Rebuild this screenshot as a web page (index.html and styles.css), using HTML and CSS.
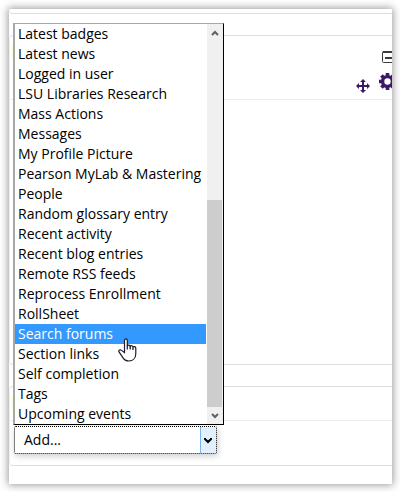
FILE: index.html
```html
<!DOCTYPE html>
<html lang="en">
<head>
<meta charset="utf-8">
<meta name="viewport" content="width=device-width, initial-scale=1">
<title>Add a block</title>
<link rel="stylesheet" href="styles.css">
</head>
<body>
<main class="panel">
  <section class="block block-end"></section>
  <section class="block block-tall">
    <header class="block-header tools">
      <span class="marker"></span>
      <button class="icon-button collapse" aria-label="Collapse block">
        <svg width="14" height="12" viewBox="0 0 14 12"><rect x="0.500" y="0.500" width="13" height="11" rx="1" fill="#fff" stroke="#3c3c3c"/><path d="M1 1h12M3 7h8" stroke="#3c3c3c" stroke-width="2"/></svg>
      </button>
      <div class="tool-row">
        <button class="icon-button" aria-label="Move block">
          <svg width="14" height="14" viewBox="0 0 14 14" fill="#3c1a68"><path d="M7 0 10 3H8v3h3V4l3 3-3 3V8H8v3h2l-3 3-3-3h2V8H3v2L0 7l3-3v2h3V3H4z"/></svg>
        </button>
        <button class="icon-button gear" aria-label="Block actions">
          <svg width="17" height="17" viewBox="0 0 16 16"><circle cx="8" cy="8" r="4.600" fill="none" stroke="#3c1a68" stroke-width="3.200"/><path d="M8 0v3M8 13v3M0 8h3M13 8h3M2.300 2.300l2 2M11.700 11.700l2 2M2.300 13.700l2-2M11.700 4.300l2-2" stroke="#3c1a68" stroke-width="3.400"/></svg>
        </button>
      </div>
    </header>
  </section>
  <section class="block block-add">
    <header class="block-header"><span class="marker"></span></header>
    <div class="picker">
      <select class="add" aria-label="Add a block"><option>Add...</option></select>
      <svg class="add-arrow" width="8" height="7" viewBox="0 0 8 7"><path d="M1 1v1l3 3 3-3V1" fill="none" stroke="#000" stroke-width="2"/></svg>
      <div class="menu">
        <ul class="options" role="listbox" aria-label="Blocks">
          <li role="option">Latest badges</li>
          <li role="option">Latest news</li>
          <li role="option">Logged in user</li>
          <li role="option">LSU Libraries Research</li>
          <li role="option">Mass Actions</li>
          <li role="option">Messages</li>
          <li role="option">My Profile Picture</li>
          <li role="option">Pearson MyLab &amp; Mastering</li>
          <li role="option">People</li>
          <li role="option">Random glossary entry</li>
          <li role="option">Recent activity</li>
          <li role="option">Recent blog entries</li>
          <li role="option">Remote RSS feeds</li>
          <li role="option">Reprocess Enrollment</li>
          <li role="option">RollSheet</li>
          <li role="option" class="active" aria-selected="true">Search forums
            <svg class="cursor" width="19" height="24" viewBox="0 0 19 24"><path d="M6.500 14.500V2.600C6.500.4 9.300.4 9.300 2.600V8c.4-1.300 2.700-1.200 2.900.4.500-1.100 2.600-.9 2.800.7.600-1 2.800-.7 2.800 1.200v5.200c0 4.500-2.900 7.500-7 7.500-3 0-4.700-1.200-6.100-3.600L1 13.900c-.8-1.700 1.200-2.700 2.500-1.500z" fill="#fff" stroke="#1c1c2c" stroke-width="1.200"/><path d="M9.300 7.500v4M12.200 8.500v3M15 9.500v2.500" stroke="#1c1c2c" stroke-width="1.200"/></svg>
          </li>
          <li role="option">Section links</li>
          <li role="option">Self completion</li>
          <li role="option">Tags</li>
          <li role="option">Upcoming events</li>
        </ul>
        <div class="scrollbar">
          <button class="icon-button scroll-step" aria-label="Scroll up"><svg width="8" height="6" viewBox="0 0 8 6"><path d="M1 5 4 2 7 5" fill="none" stroke="#606060" stroke-width="2"/></svg></button>
          <div class="track"><div class="thumb"></div></div>
          <button class="icon-button scroll-step" aria-label="Scroll down"><svg width="8" height="6" viewBox="0 0 8 6"><path d="M1 1 4 4 7 1" fill="none" stroke="#606060" stroke-width="2"/></svg></button>
        </div>
      </div>
    </div>
  </section>
</main>
</body>
</html>
```
FILE: styles.css
```css
* { box-sizing: border-box; }

body {
  margin: 0;
  padding: 9px 8px 8px 9px;
  background: #fff;
  color: #000;
  font: 14px/20px "Open Sans", "Noto Sans", sans-serif;
}

.panel {
  display: flex;
  flex-direction: column;
  gap: 21px;
  padding-bottom: 18px;
  overflow: hidden;
  background: #fff;
  box-shadow: 0 0 8px 1px #999;
}

.block {
  margin-right: -10px;
  border: 1px solid #dedede;
  border-left-color: #f0f0f0;
  border-radius: 4px;
}

.block-end {
  height: 5px;
  border-top: 0;
  border-radius: 0 0 4px 4px;
}

.block-tall { min-height: 330px; }
.block-add { padding-bottom: 11px; }

.block-header {
  display: flex;
  min-height: 34px;
  padding: 9px 0 7px 2px;
  border-bottom: 1px solid #ececec;
}

.marker {
  width: 2px;
  height: 17px;
  background: repeating-linear-gradient(#fcfbc8 0 6px, #fff 6px 8px);
}

.tools {
  position: relative;
  flex-direction: column;
  align-items: flex-end;
  min-height: 64px;
  padding: 9px 5px 5px 2px;
}

.tools .marker { position: absolute; left: 2px; }

.icon-button {
  display: flex;
  align-items: center;
  justify-content: center;
  padding: 0;
  border: 0;
  background: none;
}

.collapse { margin: 6px 0 10px; }

.tool-row {
  display: flex;
  align-items: flex-end;
  gap: 9px;
}

.gear { padding-bottom: 3px; }

.picker {
  position: relative;
  width: 203px;
  margin: 5px 0 0 4px;
}

.add {
  display: block;
  width: 100%;
  height: 28px;
  padding: 0 24px 0 9px;
  appearance: none;
  border: 1px dotted #000;
  border-radius: 2px;
  outline: 0;
  background: linear-gradient(90deg, #7eb4ea 1px, #e2effc 1px) right / 16px 100% no-repeat #fff;
  box-shadow: 1px 2px 6px #ccc;
  color: #000;
  font: inherit;
}

.add-arrow {
  position: absolute;
  right: 5px;
  top: 11px;
  pointer-events: none;
}

.menu {
  position: absolute;
  left: -1px;
  bottom: 29px;
  display: flex;
  width: 211px;
  border: 1px solid #000;
  border-top-color: #a8a8a8;
  border-left: 2px solid #a8a8a8;
  background: #fff;
}

.options {
  flex: 1;
  margin: 0;
  padding: 0 1px 0 0;
  list-style: none;
  white-space: nowrap;
}

.options li {
  position: relative;
  height: 20px;
  padding-left: 3px;
}

.options .active {
  background: #3399ff;
  color: #fff;
}

.cursor {
  position: absolute;
  left: 103px;
  top: 14px;
  z-index: 1;
}

.scrollbar {
  display: flex;
  flex-direction: column;
  width: 16px;
  padding-right: 1px;
  background: #f0f0f0;
}

.scroll-step { height: 17px; }

.track {
  display: flex;
  flex: 1;
  align-items: flex-end;
}

.thumb {
  width: 100%;
  height: 207px;
  background: #cdcdcd;
}
```
